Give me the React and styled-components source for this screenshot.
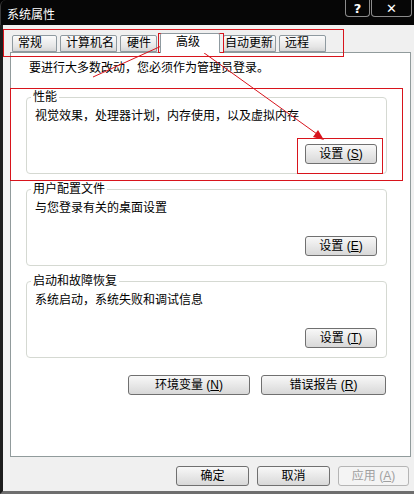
import React from 'react';
import styled, { createGlobalStyle } from 'styled-components';

const GlobalStyle = createGlobalStyle`
  html, body {
    margin: 0;
    padding: 0;
    background: #000;
  }
  body {
    font-family: "Liberation Sans", "Noto Sans CJK SC", sans-serif;
    font-size: 12px;
    color: #000;
  }
`;

const Window = styled.div`
  position: relative;
  width: 414px;
  height: 494px;
  background: #000;
  overflow: hidden;
`;

const TitleBar = styled.div`
  height: 25px;
  display: flex;
  align-items: flex-start;
  justify-content: space-between;
  background: #060606;
  border-top-left-radius: 6px;
  border-left: 1px solid #3a3a3a;
  box-sizing: border-box;
`;

const Title = styled.div`
  padding: 8px 0 0 6px;
  line-height: 14px;
  color: #fff;
`;

const Caption = styled.div`
  display: flex;
  gap: 1px;
  margin-right: 2px;
`;

const CaptionButton = styled.div`
  width: ${p => p.w}px;
  height: 17px;
  box-sizing: border-box;
  border: 1px solid #8c8c8c;
  border-top: none;
  border-radius: 0 0 4px 4px;
  display: flex;
  align-items: center;
  justify-content: center;
  color: #fff;
  font-family: "DejaVu Sans", sans-serif;
  font-weight: bold;
  font-size: 13px;
`;

const Body = styled.div`
  height: 469px;
  box-sizing: border-box;
  background: #f0f0f0;
  border-left: 3px solid #1c1c1c;
  border-bottom: 3px solid #6e6e6e;
  padding-top: 8px;
`;

const TabRow = styled.div`
  display: flex;
  align-items: flex-end;
  height: 19px;
  padding-left: 9px;
  gap: 3px;
`;

const Tab = styled.div`
  position: relative;
  width: ${p => p.w}px;
  height: ${p => (p.active ? 20 : 17)}px;
  margin-bottom: ${p => (p.active ? -1 : 0)}px;
  box-sizing: border-box;
  padding-left: ${p => p.pad}px;
  border: 1px solid #8f9aa0;
  border-bottom: ${p => (p.active ? 'none' : '1px solid #8f9aa0')};
  border-radius: 2px 2px 0 0;
  background: ${p => (p.active ? '#fff' : 'linear-gradient(#fbfbfb, #e6e6e6 70%, #d6d6d6)')};
  line-height: ${p => (p.active ? 17 : 15)}px;
  white-space: nowrap;
  z-index: ${p => (p.active ? 1 : 0)};
`;

const Panel = styled.div`
  margin-left: 7px;
  width: 401px;
  height: 405px;
  box-sizing: border-box;
  border: 1px solid #919b9c;
  background: #fff;
  padding: 8px 23px 0 15px;
  display: flex;
  flex-direction: column;
`;

const Intro = styled.div`
  padding-left: 3px;
  line-height: 14px;
  margin-bottom: 15px;
`;

const Group = styled.fieldset`
  margin: 0 0 8px 0;
  padding: 5px 9px 9px 8px;
  border: 1px solid #d5d9d2;
  border-radius: 4px;
  min-width: 0;
`;

const Legend = styled.legend`
  padding: 0 2px;
  margin-left: -4px;
  line-height: 14px;
`;

const Desc = styled.div`
  line-height: 14px;
`;

const ButtonRow = styled.div`
  display: flex;
  justify-content: flex-end;
  gap: ${p => p.gap || 0}px;
  margin-top: ${p => p.top}px;
  padding-right: ${p => p.right || 0}px;
`;

const Button = styled.div`
  width: ${p => p.w}px;
  height: 20px;
  box-sizing: border-box;
  border: 1px solid ${p => (p.disabled ? '#b5b5b5' : '#707070')};
  border-radius: 3px;
  background: ${p => (p.disabled ? '#f4f4f4' : 'linear-gradient(#f8f8f8, #e8e8e8 50%, #d8d8d8)')};
  color: ${p => (p.disabled ? '#a0a0a0' : '#000')};
  text-align: center;
  line-height: 18px;
  white-space: nowrap;
`;

const Key = styled.u`
  text-underline-offset: 1px;
`;

const Footer = styled.div`
  display: flex;
  justify-content: flex-end;
  gap: 8px;
  margin-top: 9px;
  padding-right: 5px;
`;

const Marks = styled.svg`
  position: absolute;
  left: 0;
  top: 0;
  pointer-events: none;
`;

const Label = ({ text, k }) => (
  <>
    {text} (<Key>{k}</Key>)
  </>
);

const groups = [
  { title: '性能', desc: '视觉效果，处理器计划，内存使用，以及虚拟内存', k: 'S' },
  { title: '用户配置文件', desc: '与您登录有关的桌面设置', k: 'E' },
  { title: '启动和故障恢复', desc: '系统启动，系统失败和调试信息', k: 'T' },
];

const tabs = [
  { name: '常规', w: 45, pad: 5 },
  { name: '计算机名', w: 57, pad: 5 },
  { name: '硬件', w: 37, pad: 6 },
  { name: '高级', w: 60, pad: 15, active: true },
  { name: '自动更新', w: 53, pad: 1 },
  { name: '远程', w: 47, pad: 5 },
];

export default function App() {
  const red = '#d8141c';
  return (
    <Window>
      <GlobalStyle />
      <TitleBar>
        <Title>系统属性</Title>
        <Caption>
          <CaptionButton w={25}>?</CaptionButton>
          <CaptionButton w={41}>✕</CaptionButton>
        </Caption>
      </TitleBar>
      <Body>
        <TabRow>
          {tabs.map(t => (
            <Tab key={t.name} w={t.w} pad={t.pad} active={t.active}>
              {t.name}
            </Tab>
          ))}
        </TabRow>
        <Panel>
          <Intro>要进行大多数改动，您必须作为管理员登录。</Intro>
          {groups.map(g => (
            <Group key={g.title}>
              <Legend>{g.title}</Legend>
              <Desc>{g.desc}</Desc>
              <ButtonRow top={21}>
                <Button w={72}>
                  <Label text="设置" k={g.k} />
                </Button>
              </ButtonRow>
            </Group>
          ))}
          <ButtonRow top={9} gap={11} right={1}>
            <Button w={122}>
              <Label text="环境变量" k="N" />
            </Button>
            <Button w={125}>
              <Label text="错误报告" k="R" />
            </Button>
          </ButtonRow>
        </Panel>
        <Footer>
          <Button w={73}>确定</Button>
          <Button w={73}>取消</Button>
          <Button w={71} disabled>
            <Label text="应用" k="A" />
          </Button>
        </Footer>
      </Body>
      <Marks width="414" height="494" viewBox="0 0 414 494">
        <g fill="none" stroke={red} strokeWidth="1">
          <rect x="3.5" y="29.5" width="340" height="27" />
          <rect x="158.5" y="33.5" width="65" height="19" />
          <rect x="10.5" y="88.5" width="392" height="92" />
          <rect x="297.5" y="138.5" width="85" height="35" />
          <line x1="93" y1="77" x2="168" y2="43" />
          <line x1="200" y1="50" x2="317" y2="134" />
        </g>
        <g fill={red}>
          <polygon points="176,39 164,40 168,47" />
          <polygon points="324,140 313,137 318,130" />
        </g>
      </Marks>
    </Window>
  );
}
